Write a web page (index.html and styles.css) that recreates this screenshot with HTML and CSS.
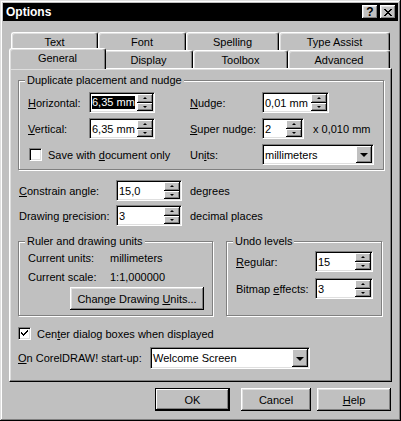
FILE: index.html
```html
<!DOCTYPE html>
<html lang="en">
<head>
    <meta charset="UTF-8">
    <title>Options</title>
    <link rel="stylesheet" href="styles.css">
</head>
<body>

    <div class="window">
        <!-- Title bar -->
        <div class="titlebar">
            <span class="title">Options</span>
            <div class="title-btns">
                <span class="tbtn help">?</span>
                <span class="tbtn close">
                    <svg width="8" height="7" viewBox="0 0 8 7" shape-rendering="crispEdges">
                        <path d="M0 0h2v1h-2zM6 0h2v1h-2zM1 1h2v1h-2zM5 1h2v1h-2zM2 2h4v1h-4zM3 3h2v1h-2zM2 4h4v1h-4zM1 5h2v1h-2zM5 5h2v1h-2zM0 6h2v1h-2zM6 6h2v1h-2z" fill="#000"/>
                    </svg>
                </span>
            </div>
        </div>

        <div class="dialog-body">
            <!-- Tabs -->
            <div class="tab-row back">
                <div class="tab t-text">Text</div>
                <div class="tab t-font">Font</div>
                <div class="tab t-spelling">Spelling</div>
                <div class="tab t-assist">Type Assist</div>
            </div>
            <div class="tab-row front">
                <div class="tab active t-general">General</div>
                <div class="tab t-display">Display</div>
                <div class="tab t-toolbox">Toolbox</div>
                <div class="tab t-advanced">Advanced</div>
            </div>

            <div class="panel">
                <fieldset class="group dup">
                    <legend>Duplicate placement and nudge</legend>
                    <div class="dup-grid">
                        <span class="lbl"><u>H</u>orizontal:</span>
                        <div class="spin w66">
                            <span class="field"><span class="selected">6,35 mm</span></span>
                            <span class="updown"><i class="up"></i><i class="down"></i></span>
                        </div>
                        <span class="lbl"><u>N</u>udge:</span>
                        <div class="spin w67">
                            <span class="field">0,01 mm</span>
                            <span class="updown"><i class="up"></i><i class="down"></i></span>
                        </div>

                        <span class="lbl"><u>V</u>ertical:</span>
                        <div class="spin w66">
                            <span class="field">6,35 mm</span>
                            <span class="updown"><i class="up"></i><i class="down"></i></span>
                        </div>
                        <span class="lbl"><u>S</u>uper nudge:</span>
                        <div class="inline">
                            <div class="spin w42">
                                <span class="field">2</span>
                                <span class="updown"><i class="up"></i><i class="down"></i></span>
                            </div>
                            <span class="unit-note">x 0,010 mm</span>
                        </div>

                        <div class="checkrow save">
                            <span class="check"></span>
                            <span>Save with <u>d</u>ocument only</span>
                        </div>
                        <span class="lbl">Un<u>i</u>ts:</span>
                        <div class="combo w112">
                            <span class="value">millimeters</span>
                            <span class="drop"><i></i></span>
                        </div>
                    </div>
                </fieldset>

                <div class="row first">
                    <span class="row-lbl"><u>C</u>onstrain angle:</span>
                    <div class="spin w66">
                        <span class="field">15,0</span>
                        <span class="updown"><i class="up"></i><i class="down"></i></span>
                    </div>
                    <span class="suffix">degrees</span>
                </div>
                <div class="row">
                    <span class="row-lbl">Drawing <u>p</u>recision:</span>
                    <div class="spin w66">
                        <span class="field">3</span>
                        <span class="updown"><i class="up"></i><i class="down"></i></span>
                    </div>
                    <span class="suffix">decimal places</span>
                </div>

                <div class="groups">
                    <fieldset class="group ruler">
                        <legend>Ruler and drawing units</legend>
                        <div class="ruler-body">
                            <div class="info">
                                <span>Current units:</span><span>millimeters</span>
                                <span>Current scale:</span><span>1:1,000000</span>
                            </div>
                            <div class="btn change"><span>Change Drawing <u>U</u>nits...</span></div>
                        </div>
                    </fieldset>
                    <fieldset class="group undo">
                        <legend>Undo levels</legend>
                        <div class="undo-body">
                            <span><u>R</u>egular:</span>
                            <div class="spin w58">
                                <span class="field">15</span>
                                <span class="updown"><i class="up"></i><i class="down"></i></span>
                            </div>
                            <span>Bitmap <u>e</u>ffects:</span>
                            <div class="spin w58">
                                <span class="field">3</span>
                                <span class="updown"><i class="up"></i><i class="down"></i></span>
                            </div>
                        </div>
                    </fieldset>
                </div>

                <div class="checkrow center">
                    <span class="check checked">
                        <svg width="7" height="7" viewBox="0 0 7 7" shape-rendering="crispEdges">
                            <path d="M6 0h1v1h-1zM5 1h2v1h-2zM0 2h1v1h-1zM4 2h2v1h-2zM0 3h2v1h-2zM3 3h2v1h-2zM1 4h3v1h-3zM2 5h1v1h-1z" fill="#000"/>
                        </svg>
                    </span>
                    <span>Cen<u>t</u>er dialog boxes when displayed</span>
                </div>

                <div class="row startup">
                    <span class="startup-lbl"><u>O</u>n CorelDRAW! start-up:</span>
                    <div class="combo w160">
                        <span class="value">Welcome Screen</span>
                        <span class="drop"><i></i></span>
                    </div>
                </div>
            </div>

            <!-- Dialog buttons -->
            <div class="buttons">
                <div class="btn default ok">OK</div>
                <div class="btn cancel">Cancel</div>
                <div class="btn helpbtn"><span><u>H</u>elp</span></div>
            </div>
        </div>
    </div>

</body>
</html>
```

FILE: styles.css
```css
* {
    box-sizing: border-box;
}
body {
    margin: 0;
    background: #c0c0c0;
    font-family: "Liberation Sans", Arial, sans-serif;
    font-size: 11px;
    color: #000;
}
u {
    text-decoration-thickness: 1px;
    text-underline-offset: 1px;
}

/* window frame */
.window {
    width: 401px;
    height: 421px;
    padding: 3px;
    background: #c0c0c0;
    box-shadow: inset -1px -1px #000, inset 1px 1px #dfdfdf, inset -2px -2px #808080, inset 2px 2px #fff;
}
.titlebar {
    height: 18px;
    background: #000;
    color: #fff;
    display: flex;
    align-items: center;
    justify-content: space-between;
    padding: 0 2px 0 3px;
}
.title {
    font-weight: bold;
    font-size: 12px;
}
.title-btns {
    display: flex;
    gap: 2px;
}
.tbtn {
    width: 16px;
    height: 14px;
    background: #c0c0c0;
    color: #000;
    display: flex;
    align-items: center;
    justify-content: center;
    font-weight: bold;
    font-size: 12px;
    box-shadow: inset -1px -1px #000, inset 1px 1px #fff, inset -2px -2px #808080, inset 2px 2px #dfdfdf;
}

.dialog-body {
    padding: 11px 6px 0;
}

/* tabs */
.tab-row {
    display: flex;
    height: 18px;
    align-items: flex-end;
}
.tab-row.back {
    margin-left: 2px;
}
.tab {
    height: 18px;
    display: flex;
    align-items: center;
    justify-content: center;
    background: #c0c0c0;
    border-top: 1px solid #fff;
    border-left: 1px solid #fff;
    border-right: 1px solid #000;
    border-radius: 3px 3px 0 0;
    box-shadow: inset -1px 0 #808080, inset 1px 1px #dfdfdf;
    padding-top: 1px;
}
.t-text { width: 87px; }
.t-font { width: 88px; }
.t-spelling { width: 93px; }
.t-assist { width: 111px; }
.t-general { width: 97px; }
.t-display { width: 89px; margin-left: -2px; }
.t-toolbox { width: 95px; }
.t-advanced { width: 102px; }
.tab.active {
    position: relative;
    z-index: 2;
    height: 21px;
    margin-bottom: -1px;
    padding: 0 0 3px;
}

/* page panel */
.panel {
    position: relative;
    z-index: 1;
    height: 314px;
    border-top: 1px solid #fff;
    border-left: 1px solid #fff;
    border-right: 1px solid #000;
    border-bottom: 1px solid #000;
    box-shadow: inset -1px -1px #808080, inset 1px 1px #dfdfdf;
    padding: 5px 7px 0 8px;
}

.group {
    margin: 0;
    padding: 0;
    min-width: 0;
    border: 1px solid #808080;
    box-shadow: 1px 1px 0 #fff, inset 1px 1px 0 #fff;
}
.group legend {
    margin-left: 6px;
    padding: 0 2px;
    line-height: 13px;
    background: #c0c0c0;
}
.dup {
    width: 366px;
}
.dup-grid {
    display: grid;
    grid-template-columns: 61px 101px 72px 1fr;
    grid-auto-rows: 21px;
    row-gap: 5px;
    align-items: center;
    padding: 5px 0 4px 9px;
}
.inline {
    display: flex;
    align-items: center;
}
.unit-note {
    margin-left: 9px;
}

/* sunken edit with up/down buttons */
.spin, .combo {
    display: flex;
    height: 21px;
    background: #fff;
    border: 1px solid;
    border-color: #808080 #fff #fff #808080;
    box-shadow: inset 1px 1px #000, inset -1px -1px #dfdfdf;
    padding: 1px;
}
.w42 { width: 42px; }
.w58 { width: 58px; }
.w66 { width: 66px; }
.w67 { width: 67px; }
.w112 { width: 112px; }
.w160 { width: 160px; height: 22px; }
.field, .value {
    flex: 1;
    display: flex;
    align-items: center;
    padding-left: 1px;
    white-space: nowrap;
    overflow: hidden;
}
.selected {
    background: #000;
    color: #fff;
    line-height: 13px;
}
.updown {
    width: 16px;
    display: flex;
    flex-direction: column;
}
.updown i, .drop {
    flex: 1;
    background: #c0c0c0;
    display: flex;
    align-items: center;
    justify-content: center;
    box-shadow: inset -1px -1px #000, inset 1px 1px #fff, inset -2px -2px #808080;
}
.updown i::after {
    content: "";
    border-left: 2px solid transparent;
    border-right: 2px solid transparent;
}
.updown .up::after {
    border-bottom: 2px solid #000;
}
.updown .down::after {
    border-top: 2px solid #000;
}
.drop {
    flex: none;
    width: 16px;
}
.drop i {
    border-left: 4px solid transparent;
    border-right: 4px solid transparent;
    border-top: 4px solid #000;
    margin-top: 1px;
}

/* check boxes */
.checkrow {
    display: flex;
    align-items: center;
    gap: 6px;
}
.checkrow.save {
    grid-column: 1 / 3;
    padding-left: 1px;
}
.check {
    width: 13px;
    height: 13px;
    background: #fff;
    border: 1px solid;
    border-color: #808080 #fff #fff #808080;
    box-shadow: inset 1px 1px #000, inset -1px -1px #dfdfdf;
    display: flex;
    align-items: center;
    justify-content: center;
}

/* single rows */
.row {
    display: flex;
    align-items: center;
    height: 21px;
    margin-top: 4px;
}
.row.first {
    margin-top: 10px;
}
.row-lbl {
    width: 98px;
    padding-left: 1px;
}
.suffix {
    margin-left: 8px;
}

.groups {
    display: flex;
    gap: 13px;
    margin-top: 9px;
}
.ruler {
    width: 195px;
}
.undo {
    width: 156px;
}
.ruler-body {
    padding: 0 0 5px 9px;
}
.info {
    display: grid;
    grid-template-columns: 82px auto;
    grid-auto-rows: 19px;
    align-items: center;
}
.change {
    width: 134px;
    height: 24px;
    margin: 1px 0 0 42px;
}
.undo-body {
    display: grid;
    grid-template-columns: 79px 58px;
    grid-auto-rows: 21px;
    row-gap: 6px;
    align-items: center;
    padding: 3px 0 0 9px;
}

.checkrow.center {
    margin-top: 11px;
}
.row.startup {
    height: 22px;
    margin-top: 7px;
}
.startup-lbl {
    width: 132px;
}

/* push buttons */
.btn {
    height: 23px;
    display: flex;
    align-items: center;
    justify-content: center;
    background: #c0c0c0;
    box-shadow: inset -1px -1px #000, inset 1px 1px #fff, inset -2px -2px #808080, inset 2px 2px #dfdfdf;
}
.buttons {
    display: flex;
    justify-content: flex-end;
    margin-top: 6px;
    padding-right: 1px;
}
.btn.ok {
    width: 75px;
    border: 1px solid #000;
    box-shadow: inset -1px -1px #000, inset 1px 1px #fff, inset -2px -2px #808080;
}
.btn.cancel {
    width: 70px;
    margin-left: 11px;
}
.btn.helpbtn {
    width: 74px;
    margin-left: 6px;
}
```
